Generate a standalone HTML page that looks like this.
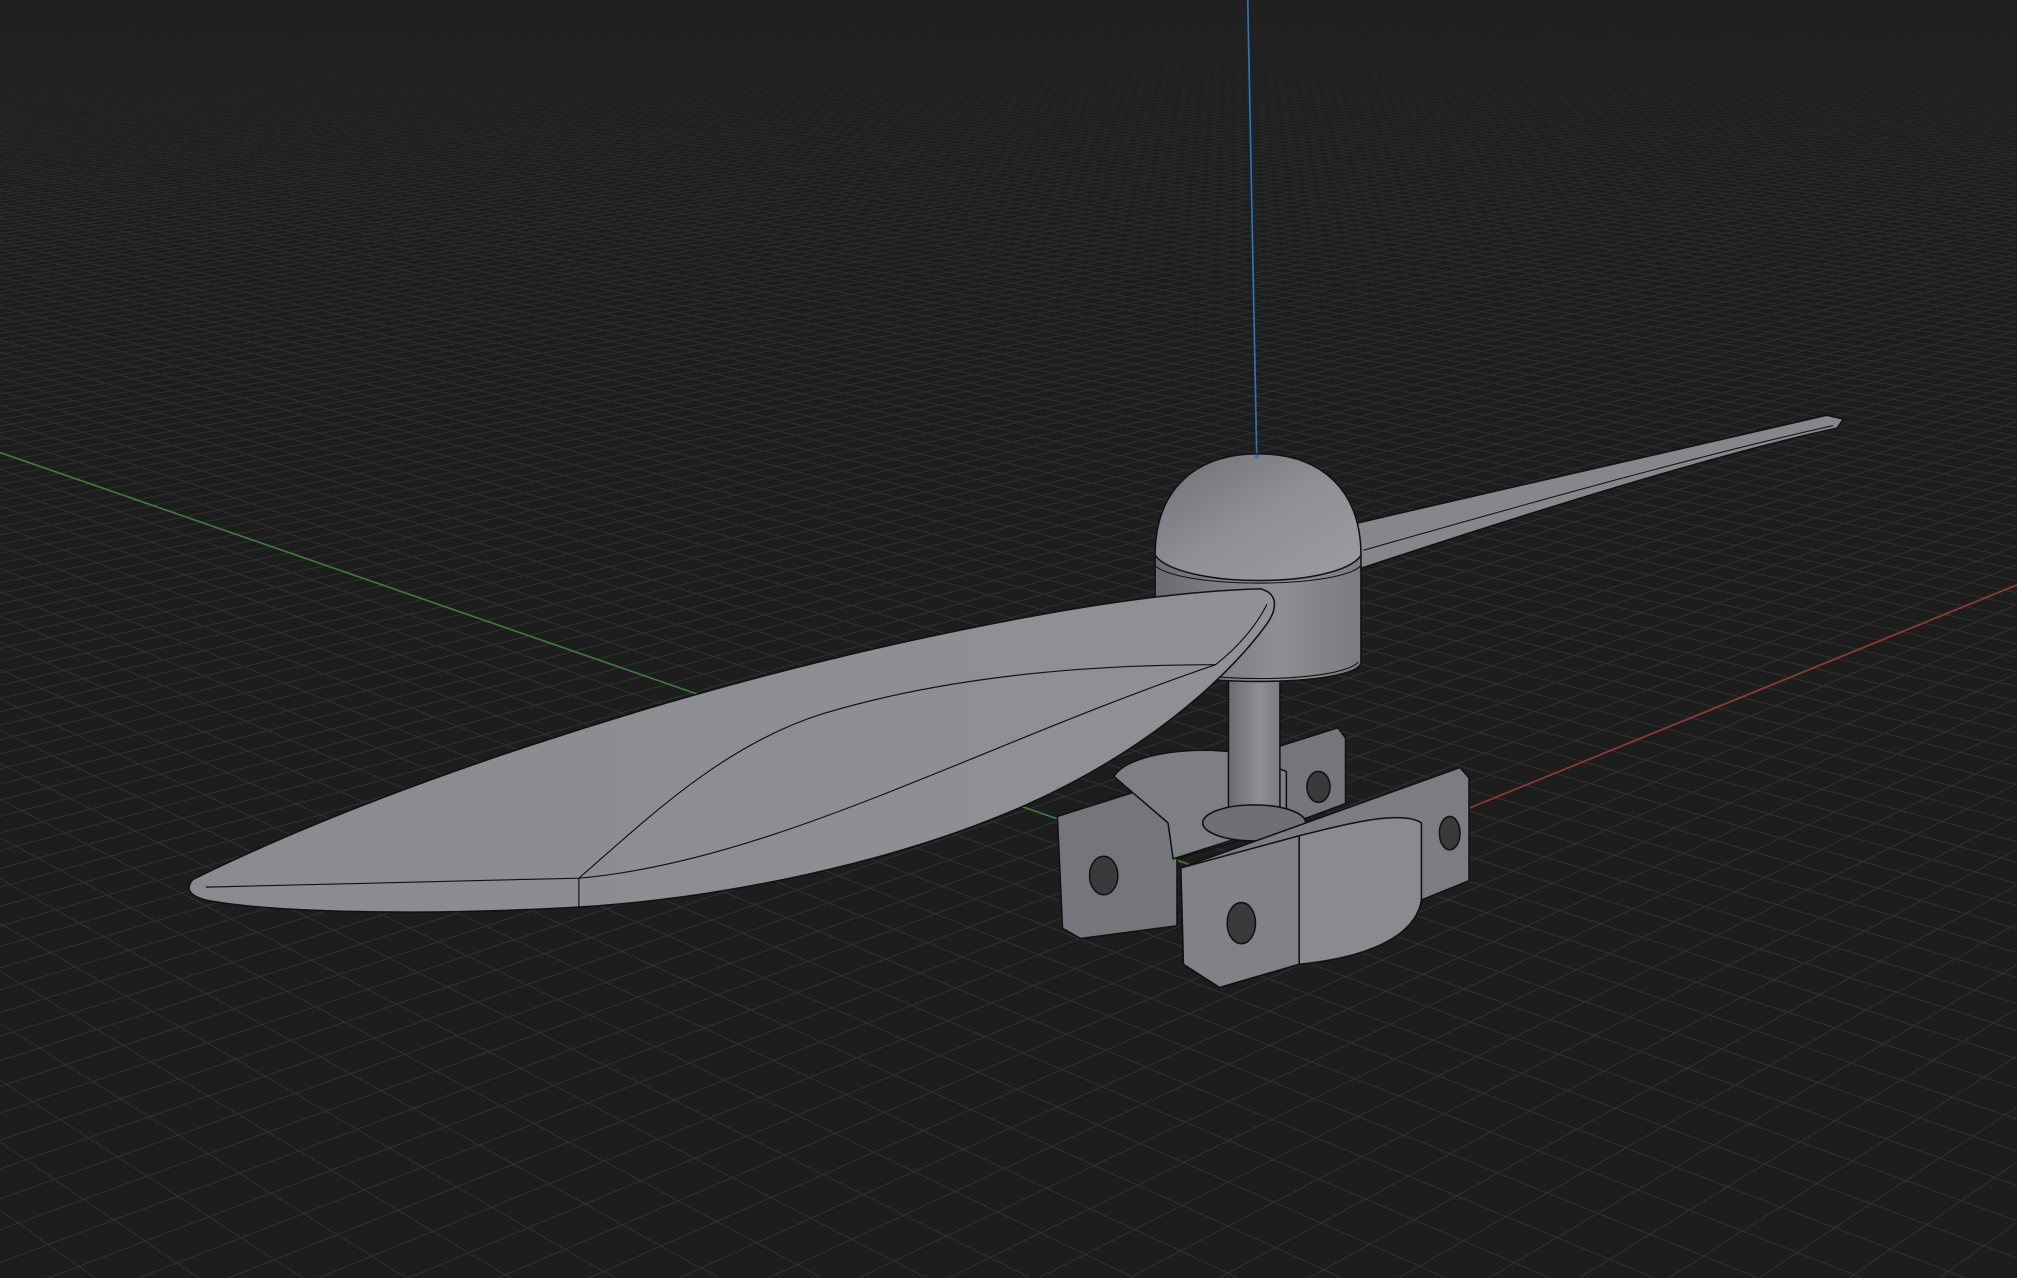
<!DOCTYPE html>
<html><head><meta charset="utf-8"><style>
html,body{margin:0;padding:0;background:#1d1d1d;overflow:hidden;width:2017px;height:1278px}
svg{display:block;position:absolute;left:0;top:0}
</style></head><body>
<svg id="s" width="2017" height="1278" viewBox="0 0 1568 994" preserveAspectRatio="none" xmlns="http://www.w3.org/2000/svg">
<defs>
<linearGradient id="dome" x1="0" y1="0" x2="1" y2="1"><stop offset="0" stop-color="#6e6f74"/><stop offset="0.5" stop-color="#8e9095"/><stop offset="1" stop-color="#9b9da2"/></linearGradient>
<linearGradient id="cyl" x1="0" y1="0" x2="1" y2="0"><stop offset="0" stop-color="#6a6b70"/><stop offset="0.6" stop-color="#8d8f94"/><stop offset="1" stop-color="#7a7b80"/></linearGradient>
<linearGradient id="blade" x1="0" y1="0" x2="1" y2="0"><stop offset="0" stop-color="#8a8b90"/><stop offset="1" stop-color="#8f9196"/></linearGradient>
<linearGradient id="fade" x1="0" y1="0" x2="0" y2="1"><stop offset="0" stop-color="#1d1d1d" stop-opacity="0.85"/><stop offset="0.35" stop-color="#1d1d1d" stop-opacity="0.3"/><stop offset="1" stop-color="#1d1d1d" stop-opacity="0"/></linearGradient>
</defs>
<rect width="1568" height="994" fill="#1d1d1d"/>
<g id="grid" stroke="#2f2f2f" stroke-width="0.9"></g>
<rect width="1568" height="500" fill="url(#fade)"/>
<line x1="0" y1="352" x2="984" y2="693" stroke="#3f7a3c" stroke-width="1.3"/>
<line x1="984" y1="693" x2="1568" y2="455" stroke="#8e3b35" stroke-width="1.3"/>
<line x1="970" y1="0" x2="977" y2="356" stroke="#2f72b8" stroke-width="1.3"/>
<g stroke="#111" stroke-width="1.2" stroke-linejoin="round">
<path d="M1050,408 C1180,378 1320,345 1420,323 L1433,326 L1428,333 C1340,352 1200,395 1058,442 Z" fill="#85878c"/>
<path d="M1060,428 C1200,388 1330,352 1425,331" fill="none" stroke-width="0.8"/>
<path d="M822,635 L1040,566 L1046,574 L1046,625 L1000,642 L915,668 L915,720 L840,730 L826,722 Z" fill="#74767b"/>
<path d="M866,604 C875,588 920,580 960,585 L1000,600 L1000,640 L912,668 L908,640 Z" fill="#7d7f84"/>
<ellipse cx="858" cy="681" rx="11" ry="15" fill="#3a3a3d"/>
<ellipse cx="1025" cy="612" rx="9" ry="12" fill="#3a3a3d"/>
<rect x="955" y="525" width="40" height="120" fill="url(#cyl)"/>
<ellipse cx="975" cy="640" rx="40" ry="14" fill="#6f7075"/>
<path d="M918,675 L1135,597 L1142,605 L1142,685 L1105,700 C1100,730 1060,745 1010,750 L948,768 L920,750 Z" fill="#7b7d82"/>
<path d="M918,675 L1010,650 L1010,750 L948,768 L920,750 Z" fill="#808287"/>
<path d="M1010,650 C1050,640 1090,630 1105,640 L1105,700 C1100,730 1060,745 1010,750 Z" fill="#898b90"/>
<ellipse cx="965" cy="718" rx="11" ry="16" fill="#3a3a3d"/>
<ellipse cx="1127" cy="648" rx="8" ry="13" fill="#3a3a3d"/>
<path d="M898,430 L898,515 C898,535 1058,535 1058,515 L1058,430 Z" fill="url(#cyl)"/>
<path d="M900,515 C920,532 1040,532 1056,515" fill="none" stroke-width="0.8"/>
<path d="M898,432 C898,380 930,353 978,353 C1026,353 1058,380 1058,432 C1040,458 918,458 898,432 Z" fill="url(#dome)"/>
<path d="M898,440 C918,458 1040,458 1058,440" fill="none" stroke-width="0.8"/>
<path d="M150,684 C300,610 520,540 700,500 C800,478 900,460 980,458 C995,462 992,475 985,485 C960,520 900,580 800,625 C700,670 560,700 440,706 C330,712 210,710 160,700 C145,696 145,690 150,684 Z" fill="url(#blade)"/>
<path d="M160,690 C260,688 360,685 450,683 C600,670 760,580 945,517 C960,505 975,490 985,470" fill="none" stroke-width="0.9"/>
<path d="M450,683 C500,640 560,580 640,555 C740,525 850,517 945,517" fill="none" stroke-width="0.9"/>
<line x1="450" y1="683" x2="450" y2="705" stroke-width="0.9"/>
</g>
<circle cx="977" cy="355" r="1.5" fill="#2f72b8"/>
</svg>
<script>
(function(){
var O=[984,693],VR=[3169,-200],VG=[-1590,-200],k1=0.0127,k2=0.011;
var g=document.getElementById('grid'),h='';
function line(A,P){var dx=P[0]-A[0],dy=P[1]-A[1];var t=4000/Math.hypot(dx,dy);
h+='<line x1="'+A[0]+'" y1="'+A[1]+'" x2="'+(A[0]+dx*t).toFixed(1)+'" y2="'+(A[1]+dy*t).toFixed(1)+'"/>';}
for(var i=-76;i<700;i++){var d=k1*i+1;var P=[(k1*i*VR[0]+O[0])/d,(k1*i*VR[1]+O[1])/d];line(VG,P);}
for(var j=-88;j<800;j++){var d=k2*j+1;var Q=[(k2*j*VG[0]+O[0])/d,(k2*j*VG[1]+O[1])/d];line(VR,Q);}
g.innerHTML=h;
})();
</script>
</body></html>
